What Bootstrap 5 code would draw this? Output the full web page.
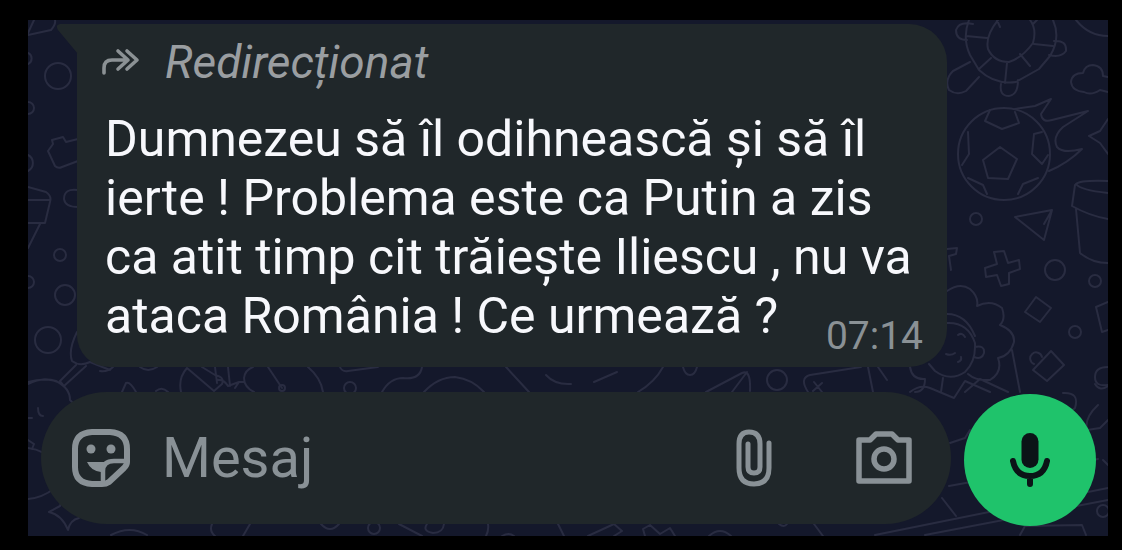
<!DOCTYPE html>
<html lang="ro">
<head>
<meta charset="utf-8">
<meta name="viewport" content="width=device-width, initial-scale=1">
<title>Mesaje</title>
<link href="https://cdn.jsdelivr.net/npm/bootstrap@5.3.0/dist/css/bootstrap.min.css" rel="stylesheet">
<style>
  body { background: #000; font-family: Roboto, "Liberation Sans", sans-serif; }
  .chat-screen { margin: 20px 14px 14px 28px; padding: 4px 12px 10px 13px; background: #14182b; }
  .wallpaper { fill: none; stroke: #292c41; stroke-width: 2; stroke-linecap: round; stroke-linejoin: round; }
  .bubble { margin: 0 149px 0 36px; padding: 10px 24px 8px 28px; min-height: 343px; border-radius: 0 38px 38px 32px; background: #20272a; }
  .bubble-tail { top: 0; left: -21px; fill: #20272a; }
  .forwarded { gap: 25px; height: 56px; margin-left: -3px; color: #9a9ea1; font-size: 46px; line-height: 56px; font-style: italic; }
  .message-text { margin-top: 20px; color: #f7f8fc; font-size: 50px; line-height: 59px; }
  .sent-time { margin-top: 27px; color: #8a9195; font-size: 39px; line-height: 44px; }
  .composer { gap: 13px; margin-top: 25px; }
  .message-box { min-width: 0; height: 132px; padding: 0 38px 0 31px; border-radius: 66px; background: #20272a; color: #899196; }
  .message-box input { height: 72px; margin-left: 32px; background: transparent; color: inherit; font-size: 56px; line-height: 72px; outline: 0; min-width: 0; }
  .message-box input::placeholder { color: #899196; opacity: 1; }
  .icon-btn { color: inherit; line-height: 0; }
  .attach-btn { margin-right: 82px; }
  .mic-btn { width: 132px; height: 132px; margin-top: 2px; background: #1fc36b; color: #0b1417; }
</style>
</head>
<body>
<main class="chat-screen position-relative overflow-hidden">
  <svg class="wallpaper position-absolute top-0 start-0 w-100 h-100" viewBox="28 20 1080 516" preserveAspectRatio="xMidYMid slice" aria-hidden="true">
    <!-- left edge -->
    <path d="M34 20 28 33M28 35 51 30Q56 24 55 20"/>
    <path d="M28 53a6 6 0 0 1 0 11M28 102a6 6 0 0 1 0 12M28 155a9 9 0 0 1 0 16"/>
    <circle cx="58" cy="76" r="13"/>
    <path d="M78 139 66 142 63 137 52 140 53 144 48 151 55 166Q58 169 62 167L78 161M28 187 46 192Q52 196 50 202L45 223H28M28 200H49M40 224 28 248M78 190Q64 188 64 199 65 207 78 207"/>
    <circle cx="60" cy="255" r="6"/><circle cx="65" cy="295" r="10"/><path d="M28 276a6 6 0 0 1 0 12"/>
    <circle cx="48" cy="340" r="13"/>
    <path d="M77 332Q68 350 72 361 80 367 90 362L110 370M76 365 60 381 64 386 86 366M28 384Q42 377 56 381 70 388 70 400L76 406M28 382Q48 376 62 384M38 408q0 8 5 8M28 418h4M28 440 34 444 32 449M28 448Q45 450 53 462M28 499Q42 498 55 488M49 512 60 506 62 499M49 512Q62 515 68 530 70 520 79 518"/>
    <!-- strip above the message box -->
    <path d="M100 371Q108 372 113 367M140 367Q148 373 157 367M122 392 126 383Q130 381 136 392M156 391q6-5 12 1M181 392Q178 378 187 368L214 391 222 384Q225 377 215 375L202 367M215 367 217 383M228 367 230 386M217 380Q224 379 228 386L239 382 244 382M235 388 239 382M254 392Q244 387 244 378 245 370 253 367M268 367 282 388M308 367Q321 378 323 392M340 367Q342 372 348 371L378 367M382 392Q390 378 403 378 420 380 422 367M424 392Q438 377 455 377 472 379 484 392M506 367 529 392"/>
    <circle cx="282" cy="388" r="3"/><circle cx="350" cy="388" r="6"/>
    <path d="M546 375Q555 385 571 384M594 382 617 372M638 392Q655 382 663 367M683 367q2 8 7 8t7-8M706 392 742 373Q751 369 750 391M732 392 747 372M808 392Q799 378 810 375L861 367M814 382 822 392M822 383 813 391M868 367 873 392"/>
    <circle cx="777" cy="380" r="10"/>
    <!-- turtle, cloud and flaming ball -->
    <path d="M969 20Q962 38 970 55L979 70Q995 85 1016 82L1039 69 1050 56Q1061 38 1053 20M998 20Q985 36 988 49 994 62 1009 62 1022 58 1033 43 1037 29 1030 20M997 20 1000 27M966 36 987 38M979 69 991 58M1007 63 1005 83M1020 54 1030 66M1034 44 1053 46M1033 24 1037 20M973 24Q959 21 956 30 956 40 967 40M1054 41Q1067 40 1066 51 1061 58 1049 55M970 62 953 71Q944 80 949 90 957 96 966 91L979 77M1001 84Q999 96 1009 96 1018 95 1018 80"/>
    <path d="M1076 20Q1089 36 1108 36M1108 92 1100 90Q1091 96 1084 92 1072 91 1071 82 1072 73 1083 73 1085 65 1093 65 1103 66 1103 76L1108 77"/>
    <circle cx="1004" cy="154" r="46"/>
    <path d="M1000 147 983 160 988 178 1008 179 1017 159ZM990 110 985 121 1002 129 1019 123 1015 112M968 132 969 154 962 165M1042 132 1034 134 1032 154 1042 164 1048 155M968 178 983 185 987 194M1038 178 1023 184 1018 194M1015 109 1035 106 1051 99 1041 114Q1042 123 1052 120L1088 111 1063 127Q1052 137 1057 147 1063 154 1082 149 1068 163 1049 171M1108 119 1100 131 1089 136 1100 143 1108 154"/>
    <!-- bucket and small shapes -->
    <path d="M1108 181Q1080 180 1076 184 1080 190 1108 193M1075 185 1072 206Q1090 216 1108 219M1076 209 1080 253Q1092 263 1108 263M1015 217 1052 210 1044 240ZM1044 224 1052 210"/>
    <circle cx="976" cy="219" r="6"/><circle cx="1055" cy="270" r="10"/><circle cx="1095" cy="281" r="6"/><circle cx="1075" cy="332" r="6"/>
    <path d="M994 252 1004 251 1008 263 1019 260 1020 269 1009 273 1009 284 1001 286 997 275 986 277 985 268 997 264ZM1036 297 1051 308 1040 322 1025 312ZM1108 302 1096 307 1102 332 1108 330M1051 351 1064 365 1047 381 1033 370ZM1034 364a6 6 0 1 1 8-7M1108 367q-13 0-13 10t13 8M947 249 957 248 956 254 949 256 951 270"/>
    <!-- curly-haired figure -->
    <path d="M947 291Q960 282 970 289 979 297 977 306 991 299 1002 308 1006 319 1000 325 1015 331 1014 342 1010 356 998 358 1003 372 990 380 976 381 968 374M947 314Q966 314 975 336M947 323Q968 322 975 343 976 362 965 372 950 382 935 371L929 364M975 347q10-2 9 6-2 7-10 4M946 354q5 2 9-1M958 335q4-3 7 2M958 362q4-1 3-5M1012 350 1020 392M965 392 980 379 1008 392M910 367Q912 380 925 379 925 392 915 392M943 378 941 392M878 367l9 13"/>
    <!-- right of the message box -->
    <path d="M910 392Q920 384 930 388L954 398 965 381 990 392M950 443 965 438 970 430 970 482M949 486 1098 459M942 498 956 516M875 535 1108 488M925 535 1108 500M1020 535 1025 526 1082 525 1086 535M1063 393Q1080 392 1075 408L1070 412M1098 405Q1084 418 1087 430L1100 428 1108 420M1103 460 1108 465M1095 384q5 8 13 2"/>
    <circle cx="1103" cy="511" r="6"/>
    <!-- strip below the message box -->
    <path d="M111 535Q130 525 147 535M212 524Q209 531 215 536M250 524 243 536M321 524q9 10 18 0M399 524 422 536M427 524Q422 531 433 533 443 533 444 524M488 524q1 6-2 12M502 536q7-4 12 0M558 524 564 536M588 536 614 524 622 531 614 536M645 536 643 529 650 525 660 534 670 528 675 536M709 536q11-10 22 0M779 524q5 4 8 0M814 524 823 536"/>
    <circle cx="374" cy="528" r="6"/>
  </svg>

  <article class="bubble position-relative">
    <svg class="bubble-tail position-absolute" width="22" height="30" viewBox="0 0 22 30" aria-hidden="true"><path d="M22 0H4Q-1 1 2 6L22 30Z"/></svg>
    <div class="forwarded d-flex align-items-center">
      <svg width="38" height="28" viewBox="0 0 38 28" fill="none" stroke="#8b9194" stroke-width="3.600" stroke-linecap="round" stroke-linejoin="round" aria-hidden="true"><path d="M2 25V20Q2 12 10 12H25M16 3 26 12 16 21M25 3 35 12 25 21"/></svg>
      <span>Redirecționat</span>
    </div>
    <p class="message-text mb-0">Dumnezeu să îl odihnească și să îl ierte ! Problema este ca Putin a zis ca atit timp cit trăiește Iliescu , nu va ataca România ! Ce urmează ? <time class="sent-time float-end" datetime="07:14">07:14</time></p>
  </article>

  <form class="composer position-relative d-flex align-items-start">
    <div class="message-box d-flex align-items-center flex-grow-1">
      <button type="button" class="icon-btn btn p-0 border-0" aria-label="Autocolante">
        <svg width="58" height="58" viewBox="0 0 58 58" fill="none" stroke="currentColor" stroke-width="6" stroke-linejoin="round"><path d="M20 3H38Q55 4 55 20V33Q55 36 52 39L37 53Q34 55 30 55H20Q3 54 3 38V20Q3 4 20 3Z"/><path d="M31 54V42Q31 32 42 32H54" stroke-width="4.500"/><circle cx="19" cy="20" r="4.500" fill="currentColor" stroke="none"/><circle cx="39" cy="20" r="4.500" fill="currentColor" stroke="none"/><path d="M15 33H38Q31 36 29 43 19 42 15 33Z" fill="currentColor" stroke="none"/></svg>
      </button>
      <input type="text" class="flex-grow-1 border-0 p-0" placeholder="Mesaj" aria-label="Mesaj">
      <button type="button" class="icon-btn attach-btn btn p-0 border-0" aria-label="Atașează">
        <svg width="38" height="58" viewBox="0 0 38 58" fill="none" stroke="currentColor" stroke-width="5" stroke-linecap="round"><path d="M34 14V39Q34 55 19 55 4 55 4 39V15Q4 3 14 3 25 3 25 15V38Q25 44 19 44 13 44 13 38V15"/></svg>
      </button>
      <button type="button" class="icon-btn btn p-0 border-0" aria-label="Cameră foto">
        <svg width="58" height="54" viewBox="0 0 58 54" fill="none" stroke="currentColor" stroke-width="5.500" stroke-linejoin="round"><path d="M4 9H15L21 3H37L43 9H54V50H4Z"/><circle cx="29" cy="28" r="10"/></svg>
      </button>
    </div>
    <button type="button" class="mic-btn btn rounded-circle border-0 p-0 flex-shrink-0 d-flex align-items-center justify-content-center" aria-label="Mesaj vocal">
      <svg width="40" height="56" viewBox="0 0 40 56" fill="none" stroke="currentColor" stroke-width="6" stroke-linecap="round" aria-hidden="true"><rect x="11.500" y="1" width="17" height="35" rx="8.500" fill="currentColor" stroke="none"/><path d="M3 29Q6 44 20 44 34 44 37 29M20 45V52"/></svg>
    </button>
  </form>
</main>
<script src="https://cdn.jsdelivr.net/npm/bootstrap@5.3.0/dist/js/bootstrap.bundle.min.js"></script>
</body>
</html>
